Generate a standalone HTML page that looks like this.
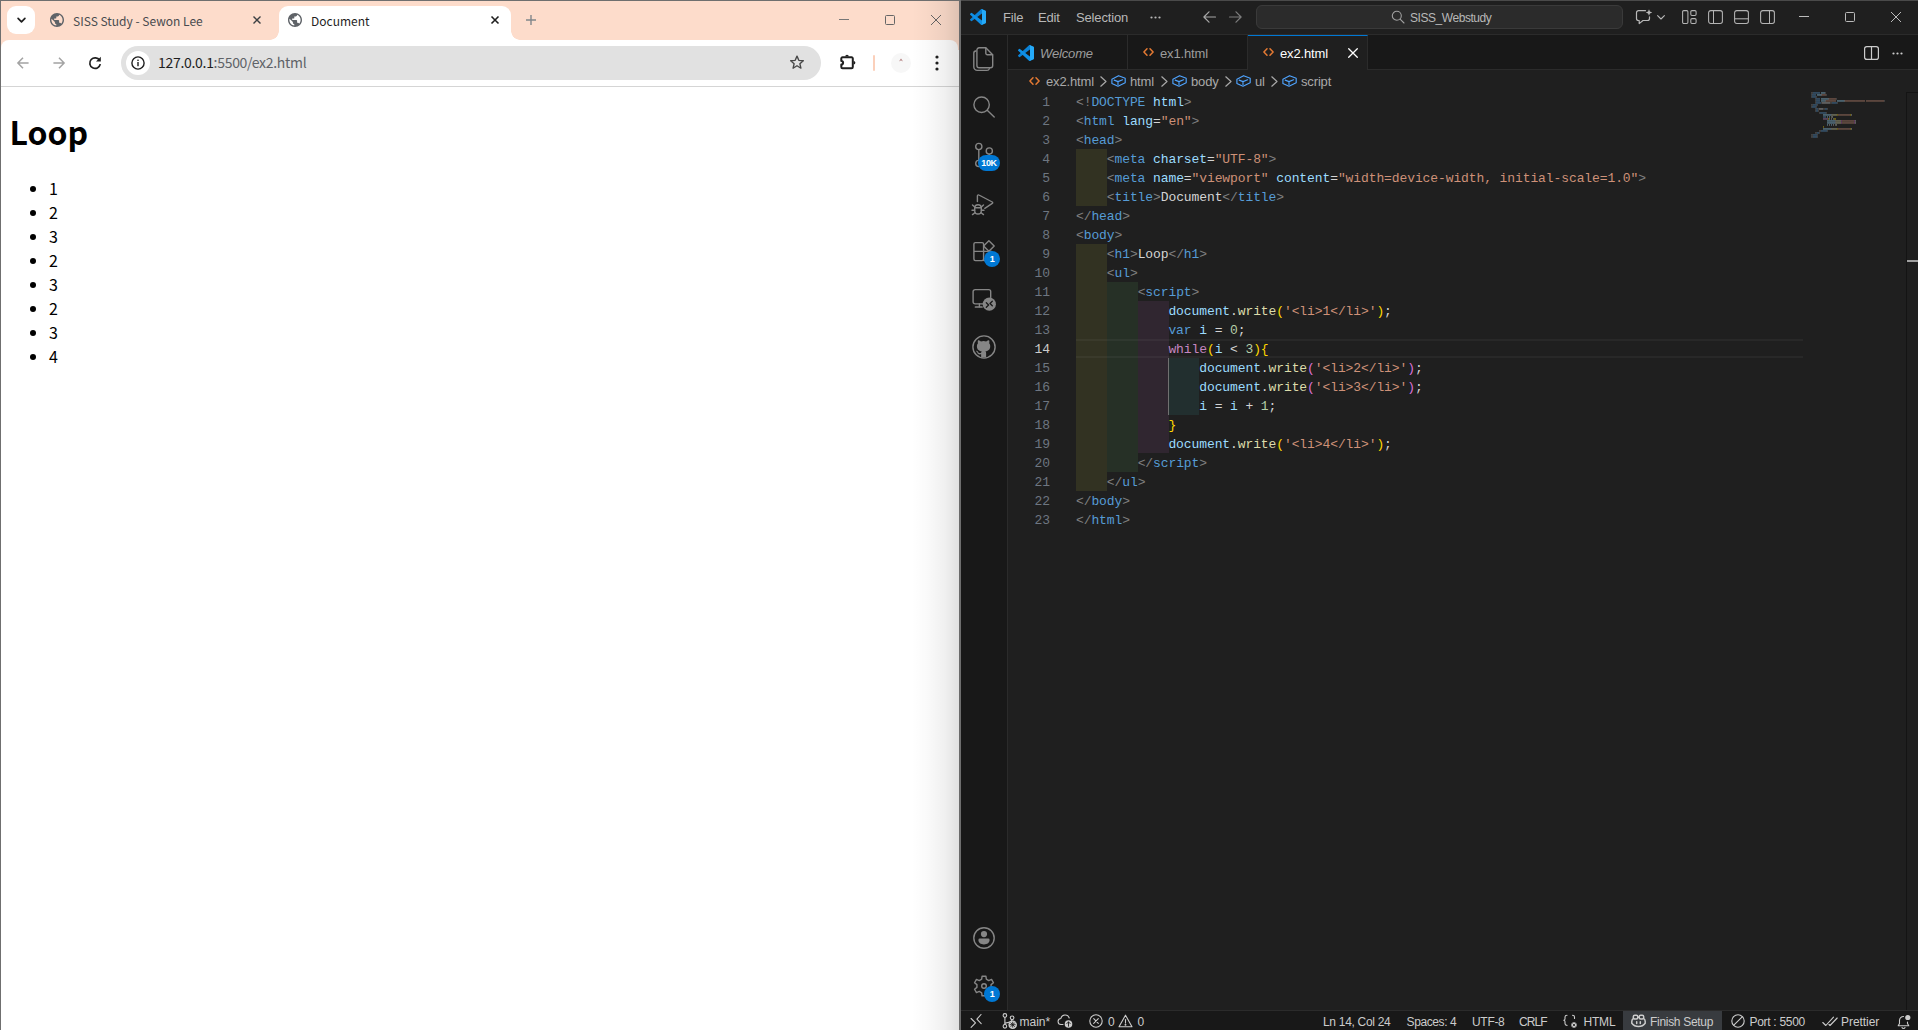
<!DOCTYPE html>
<html lang="en">
<head>
<meta charset="UTF-8">
<title>Document</title>
<style>
*{box-sizing:border-box;margin:0;padding:0}
html,body{width:1918px;height:1030px;overflow:hidden;background:#fff}
body{position:relative;font-family:"Liberation Sans","Noto Sans CJK KR",sans-serif}
.abs{position:absolute}
svg{display:block;overflow:visible}
/* ---------- Chrome ---------- */
#chrome{position:absolute;left:0;top:0;width:961px;height:1030px;background:#fff;overflow:hidden}
#tabstrip{position:absolute;left:0;top:0;width:961px;height:50px;background:#fddccb}
#toolbar{position:absolute;left:1px;top:40px;width:957px;height:46px;background:#fff;border-radius:8px 8px 0 0}
#tbline{position:absolute;left:1px;top:86px;width:959px;height:1px;background:#d5d5d5}
.ctab{position:absolute;top:6px;height:34px;font-family:"Noto Sans CJK KR","Liberation Sans",sans-serif;font-size:12px;color:#484b4f;white-space:nowrap}
.ctab .t{position:absolute;top:0;line-height:30px}
#tabsearch{position:absolute;left:7px;top:6px;width:28px;height:28px;border-radius:9px;background:#fff}
#activetab{position:absolute;left:279px;top:6px;width:232px;height:34px;background:#fff;border-radius:9px 9px 0 0}
#activetab:before,#activetab:after{content:"";position:absolute;bottom:0;width:9px;height:9px;background:radial-gradient(circle at 0 0,rgba(255,255,255,0) 8.5px,#fff 9px)}
#activetab:before{left:-9px}
#activetab:after{right:-9px;background:radial-gradient(circle at 100% 0,rgba(255,255,255,0) 8.5px,#fff 9px)}
#omni{position:absolute;left:121px;top:46px;width:700px;height:34px;border-radius:17px;background:#e1e1e1}
#omni .ic{position:absolute;left:5px;top:5px;width:24px;height:24px;border-radius:12px;background:#fff}
#url{position:absolute;left:158px;top:46px;line-height:33px;font-size:14px;letter-spacing:-0.3px;color:#5f6368;font-family:"Noto Sans CJK KR","Liberation Sans",sans-serif;white-space:nowrap}
#url b{font-weight:normal;color:#1f1f1f}
#cborder-l{position:absolute;left:0;top:0;width:1px;height:1030px;background:#6f6f6f}
#cborder-t{position:absolute;left:0;top:0;width:961px;height:1px;background:#6f6f6f}
/* page */
#page{position:absolute;left:1px;top:87px;width:959px;height:943px;background:#fff;color:#000;font-family:"Noto Sans CJK KR","Liberation Sans",sans-serif}
#page h1{position:absolute;left:8.5px;top:21px;font-size:32px;line-height:46px;font-weight:bold;letter-spacing:0}
#page ul{position:absolute;left:8px;top:89px;list-style:none}
#page li{position:relative;height:24px;line-height:24px;font-size:16px;padding-left:40px}
#page li:before{content:"";position:absolute;left:21px;top:10px;width:6px;height:6px;border-radius:3px;background:#000}
/* ---------- VS Code ---------- */
#vsc{position:absolute;left:960px;top:0;width:958px;height:1030px;background:#1f1f1f;color:#ccc;font-size:13px;overflow:hidden}
#vsc{font-family:"Liberation Sans",sans-serif}
#vsc .bl{position:absolute;background:#2b2b2b}
#titlebar{position:absolute;left:1px;top:1px;width:957px;height:33px;background:#1f1f1f}
.menu{position:absolute;top:2px;line-height:32px;font-size:13px;letter-spacing:-0.15px;color:#ccc;white-space:nowrap}
#cmd{position:absolute;left:296px;top:5px;width:367px;height:24px;border-radius:6px;background:#2b2b2b;border:1px solid #3a3a3a}
#actbar{position:absolute;left:1px;top:35px;width:46px;height:975px;background:#181818}
#tabs{position:absolute;left:48px;top:35px;width:910px;height:35px;background:#181818}
.vtab{position:absolute;top:0;height:34px;width:120px;border-right:1px solid #2b2b2b;font-size:13px;color:#9d9d9d;white-space:nowrap}
.vtab .t{position:absolute;top:0;line-height:35px}
.vtab.act{background:#1f1f1f;height:35px;color:#fff;border-top:1px solid #0078d4}
.vtab.act .t{line-height:34px;top:0}
#crumbs{position:absolute;left:48px;top:70px;width:896px;height:22px;font-size:13px;color:#a9a9a9;white-space:nowrap}
#crumbs span{position:absolute;top:0;line-height:22px}
#editor{position:absolute;left:48px;top:92px;width:910px;height:917px}
.ln{position:absolute;left:0;width:42px;padding-top:1px;text-align:right;font-family:"Liberation Mono",monospace;font-size:13px;letter-spacing:-0.1px;line-height:19px;color:#6e7681;height:19px}
.ln.cur{color:#ccc}
.cl{position:absolute;left:68px;height:19px;padding-top:1px;line-height:19px;font-family:"Liberation Mono",monospace;font-size:13px;letter-spacing:-0.1px;white-space:pre;color:#d4d4d4}
.g{color:#808080}.tg{color:#569cd6}.at{color:#9cdcfe}.st{color:#ce9178}.kw{color:#569cd6}.ct{color:#c586c0}.nu{color:#b5cea8}.fn{color:#dcdcaa}.b1{color:#ffd700}.b2{color:#da70d6}.tx{color:#d4d4d4}
.ig{position:absolute;width:30.8px}
#status{position:absolute;left:1px;top:1010px;width:957px;height:20px;background:#181818;border-top:1px solid #2b2b2b;font-size:12px;color:#ccc;white-space:nowrap}
#status span{position:absolute;top:0;line-height:23px}
.badge{position:absolute;background:#0078d4;color:#fff;font-weight:bold;font-size:9px;letter-spacing:-0.3px;text-align:center;border-radius:8px;height:16px;line-height:16px}
</style>
</head>
<body>
<div id="chrome">
  <div id="tabstrip"></div>
  <div id="tabsearch">
    <svg class="abs" style="left:9.500px;top:10.500px" width="9" height="7.200" viewBox="0 0 10 8"><path d="M1.2 1.6 L5 5.4 L8.8 1.6" fill="none" stroke="#1f1f1f" stroke-width="1.9" stroke-linecap="round" stroke-linejoin="round"/></svg>
  </div>
  <div class="ctab" style="left:40px;width:235px">
    <svg class="abs" style="left:10px;top:7px" width="14" height="14" viewBox="0 0 24 24"><path fill="#5f6368" d="M12 0C5.4 0 0 5.4 0 12s5.4 12 12 12 12-5.400 12-12S18.600 0 12 0zm-1.200 21.500c-4.700-.6-8.400-4.600-8.400-9.500 0-.700.100-1.400.200-2.100L8.400 15.600v1.200c0 1.300 1.100 2.400 2.400 2.400v2.300zm8.300-3c-.3-1-1.200-1.700-2.300-1.700h-1.200v-3.600c0-.700-.5-1.200-1.200-1.200H7.200V9.600h2.400c.7 0 1.200-.5 1.200-1.200V6h2.400c1.300 0 2.400-1.100 2.400-2.400v-.5c3.500 1.400 6 4.900 6 8.900 0 2.500-1 4.800-2.500 6.500z"/></svg>
    <span class="t" style="left:33px">SISS Study - Sewon Lee</span>
    <svg class="abs" style="left:213px;top:10px" width="8" height="8" viewBox="0 0 8 8"><path d="M0.500.5 L7.500 7.500 M7.500.5 L0.500 7.500" stroke="#3c4043" stroke-width="1.400" fill="none"/></svg>
  </div>
  <div id="activetab"></div>
  <div class="ctab" style="left:279px;width:233px;color:#1f1f1f">
    <svg class="abs" style="left:9px;top:7px" width="14" height="14" viewBox="0 0 24 24"><path fill="#5f6368" d="M12 0C5.4 0 0 5.4 0 12s5.4 12 12 12 12-5.400 12-12S18.600 0 12 0zm-1.200 21.500c-4.700-.6-8.400-4.600-8.400-9.500 0-.700.100-1.400.200-2.100L8.400 15.600v1.200c0 1.300 1.100 2.400 2.400 2.400v2.300zm8.300-3c-.3-1-1.200-1.700-2.300-1.700h-1.200v-3.600c0-.700-.5-1.200-1.200-1.200H7.200V9.600h2.400c.7 0 1.200-.5 1.200-1.200V6h2.400c1.300 0 2.400-1.100 2.400-2.400v-.5c3.500 1.400 6 4.900 6 8.900 0 2.500-1 4.800-2.500 6.500z"/></svg>
    <span class="t" style="left:32px">Document</span>
    <svg class="abs" style="left:212px;top:10px" width="8" height="8" viewBox="0 0 8 8"><path d="M0.500.5 L7.500 7.500 M7.500.5 L0.500 7.500" stroke="#1f1f1f" stroke-width="1.600" fill="none"/></svg>
  </div>
  <!-- new tab plus -->
  <svg class="abs" style="left:526px;top:15px" width="10" height="10" viewBox="0 0 10 10"><path d="M5 0V10M0 5H10" stroke="#80868b" stroke-width="1.400" fill="none"/></svg>
  <!-- window controls -->
  <svg class="abs" style="left:839px;top:19px" width="10" height="1" viewBox="0 0 10 1"><rect width="10" height="1" fill="#777"/></svg>
  <svg class="abs" style="left:885px;top:15px" width="10" height="10" viewBox="0 0 10 10"><rect x=".5" y=".5" width="9" height="9" rx="1" fill="none" stroke="#666" stroke-width="1"/></svg>
  <svg class="abs" style="left:931px;top:15px" width="10" height="10" viewBox="0 0 10 10"><path d="M0 0L10 10M10 0L0 10" stroke="#666" stroke-width="1" fill="none"/></svg>

  <div id="toolbar"></div>
  <div id="tbline"></div>
  <!-- nav -->
  <svg class="abs" style="left:17px;top:57px" width="12" height="12" viewBox="0 0 12 12"><path d="M6 .7 L.9 6 L6 11.300 M1 6 H11.600" stroke="#a3a3a3" stroke-width="1.500" fill="none"/></svg>
  <svg class="abs" style="left:53px;top:57px" width="12" height="12" viewBox="0 0 12 12"><path d="M6 .7 L11.100 6 L6 11.300 M11 6 H.4" stroke="#a3a3a3" stroke-width="1.500" fill="none"/></svg>
  <svg class="abs" style="left:88px;top:56px" width="14" height="14" viewBox="0 0 14 14"><path d="M11.600 4.300 A5.300 5.300 0 1 0 12.300 8.200" stroke="#1f1f1f" stroke-width="1.700" fill="none"/><path d="M12.800.8 V5.600 H8 Z" fill="#1f1f1f"/></svg>
  <div id="omni"><div class="ic"></div>
    <svg class="abs" style="left:10px;top:10px" width="14" height="14" viewBox="0 0 14 14"><circle cx="7" cy="7" r="6.100" fill="none" stroke="#1f1f1f" stroke-width="1.400"/><rect x="6.300" y="6" width="1.400" height="4.200" fill="#1f1f1f"/><rect x="6.300" y="3.600" width="1.400" height="1.400" fill="#1f1f1f"/></svg>
  </div>
  <div id="url"><b>127.0.0.1</b>:5500/ex2.html</div>
  <!-- star -->
  <svg class="abs" style="left:789px;top:54px" width="16" height="16" viewBox="0 0 24 24"><path d="M12 3.200l2.700 6.300 6.800.6-5.200 4.500 1.600 6.700L12 17.700l-5.900 3.600 1.600-6.700-5.200-4.500 6.800-.6z" fill="none" stroke="#474747" stroke-width="2" stroke-linejoin="round"/></svg>
  <!-- extension puzzle -->
  <svg class="abs" style="left:838px;top:53px" width="18" height="18" viewBox="0 0 18 18"><path d="M3.300 5.500a1.200 1.200 0 0 1 1.200-1.200H13.600a1.200 1.200 0 0 1 1.200 1.200V14.100a1.200 1.200 0 0 1-1.200 1.200H4.500a1.200 1.200 0 0 1-1.200-1.200V11.600a1.800 1.800 0 0 0 0-3.600Z" fill="none" stroke="#1f1f1f" stroke-width="2" stroke-linejoin="round"/><path d="M7.200 3.500a1.800 1.800 0 0 1 3.600 0zM15.600 8a1.800 1.800 0 0 1 0 3.600z" fill="#1f1f1f"/></svg>
  <div class="abs" style="left:873px;top:55px;width:2px;height:16px;background:#fbd0bb;border-radius:1px"></div>
  <div class="abs" style="left:891px;top:53px;width:20px;height:20px;border-radius:10px;background:#f7f7f7"></div>
  <svg class="abs" style="left:898px;top:58px" width="6" height="5" viewBox="0 0 6 5"><path d="M3 .5 L5 3.500 L3 2.300 L1 3.500Z" fill="#8b3a3a" opacity=".7"/></svg>
  <svg class="abs" style="left:935px;top:55px" width="4" height="16" viewBox="0 0 4 16"><circle cx="2" cy="2" r="1.600" fill="#1f1f1f"/><circle cx="2" cy="8" r="1.600" fill="#1f1f1f"/><circle cx="2" cy="14" r="1.600" fill="#1f1f1f"/></svg>

  <div id="page">
    <h1>Loop</h1>
    <ul><li>1</li><li>2</li><li>3</li><li>2</li><li>3</li><li>2</li><li>3</li><li>4</li></ul>
  </div>
  <div class="abs" style="left:912px;top:0;width:47px;height:1030px;background:linear-gradient(to right,rgba(0,0,0,0),rgba(0,0,0,0.02) 30%,rgba(0,0,0,0.06) 70%,rgba(0,0,0,0.12))"></div><div class="abs" style="left:959px;top:0;width:2px;height:1030px;background:#6a6a6a"></div><div id="cborder-l"></div><div id="cborder-t"></div>
</div>
<div id="vsc">
<div class="abs" style="left:0;top:0;width:958px;height:1px;background:#4a4a4a"></div>
<div class="abs" style="left:0;top:0;width:1px;height:1030px;background:#6e6e6e"></div>
<div id="titlebar"></div>
<div class="bl" style="left:1px;top:34px;width:957px;height:1px"></div>
<!-- logo -->
<svg class="abs" style="left:10px;top:9px" width="16" height="16" viewBox="0 0 100 100"><path d="M96.500 10.800 75.900.9a6.200 6.200 0 0 0-7.100 1.200L1.300 63.600a4.200 4.200 0 0 0 0 6.200l5.500 5a4.200 4.200 0 0 0 5.300.2L93.400 13.400c2.700-2.100 6.600-.1 6.600 3.300v-.2a6.300 6.300 0 0 0-3.500-5.700Z" fill="#0b82d6"/><path d="m96.500 89.200-20.600 9.900a6.200 6.200 0 0 1-7.100-1.200L1.300 36.400a4.200 4.200 0 0 1 0-6.200l5.500-5a4.200 4.200 0 0 1 5.300-.2l81.300 61.600c2.700 2.100 6.600.1 6.600-3.300v.2a6.300 6.300 0 0 1-3.500 5.700Z" fill="#0e8fe6"/><path d="M75.900 99.100a6.200 6.200 0 0 1-7.100-1.200c2.300 2.300 6.200.7 6.200-2.600V4.700c0-3.300-3.900-4.900-6.200-2.600A6.200 6.200 0 0 1 75.900.9l20.600 9.900a6.300 6.300 0 0 1 3.500 5.600v67.200a6.300 6.300 0 0 1-3.500 5.600Z" fill="#25aaf8"/></svg>
<span class="menu" style="left:43px;color:#b8b8b8">File</span>
<span class="menu" style="left:78px;color:#b8b8b8">Edit</span>
<span class="menu" style="left:116px;color:#b8b8b8">Selection</span>
<svg class="abs" style="left:190px;top:16px" width="11" height="3" viewBox="0 0 11 3"><circle cx="1.500" cy="1.500" r="1.100" fill="#b8b8b8"/><circle cx="5.500" cy="1.500" r="1.100" fill="#b8b8b8"/><circle cx="9.500" cy="1.500" r="1.100" fill="#b8b8b8"/></svg>
<!-- nav arrows -->
<svg class="abs" style="left:243px;top:11px" width="13" height="12" viewBox="0 0 13 12"><path d="M6 .8 L.9 6 L6 11.200 M1 6 H12.500" stroke="#a8a8a8" stroke-width="1.200" fill="none" stroke-linecap="round" stroke-linejoin="round"/></svg>
<svg class="abs" style="left:269px;top:11px" width="13" height="12" viewBox="0 0 13 12"><path d="M7 .8 L12.100 6 L7 11.200 M12 6 H.5" stroke="#7c7c7c" stroke-width="1.200" fill="none" stroke-linecap="round" stroke-linejoin="round"/></svg>
<div id="cmd"></div>
<svg class="abs" style="left:431px;top:10px" width="14" height="14" viewBox="0 0 14 14"><circle cx="5.800" cy="5.800" r="4.500" fill="none" stroke="#a0a0a0" stroke-width="1.100"/><path d="M9.100 9.100 L13 13" stroke="#a0a0a0" stroke-width="1.100" stroke-linecap="round"/></svg>
<span class="menu" style="left:450px;font-size:12px;top:2px;line-height:33px;letter-spacing:-0.45px;color:#b8b8b8">SISS_Webstudy</span>
<!-- copilot chat -->
<svg class="abs" style="left:675px;top:9px" width="18" height="16" viewBox="0 0 18 16"><path d="M10.500 1.700 H3.500 a2 2 0 0 0 -2 2 V9.500 a2 2 0 0 0 2 2 H4.200 V14.600 L8 11.500 H12.500 a2 2 0 0 0 2 -2 V7.800" fill="none" stroke="#b8b8b8" stroke-width="1.200" stroke-linejoin="round" stroke-linecap="round"/><path d="M14 .3 l.9 2.300 2.300.9 -2.300.9 -.9 2.300 -.9-2.300 -2.300-.9 2.300-.9z" fill="#b8b8b8"/></svg>
<svg class="abs" style="left:697px;top:15px" width="8" height="5" viewBox="0 0 8 5"><path d="M.6.6 L4 4 L7.400.6" fill="none" stroke="#b8b8b8" stroke-width="1.100" stroke-linecap="round" stroke-linejoin="round"/></svg>
<!-- layout icons -->
<svg class="abs" style="left:722px;top:10px" width="15" height="14" viewBox="0 0 15 14"><rect x=".6" y=".6" width="5.300" height="12.800" rx="1.200" fill="none" stroke="#b4b4b4" stroke-width="1.050"/><rect x="8.800" y=".6" width="5.300" height="4.800" rx="1.200" fill="none" stroke="#b4b4b4" stroke-width="1.050"/><rect x="8.800" y="8.600" width="5.300" height="4.800" rx="1.200" fill="none" stroke="#b4b4b4" stroke-width="1.050"/></svg>
<svg class="abs" style="left:748px;top:10px" width="15" height="14" viewBox="0 0 15 14"><rect x=".6" y=".6" width="13.800" height="12.800" rx="2.200" fill="none" stroke="#b4b4b4" stroke-width="1.050"/><path d="M5.500.6V13.400" stroke="#b4b4b4" stroke-width="1.050"/></svg>
<svg class="abs" style="left:774px;top:10px" width="15" height="14" viewBox="0 0 15 14"><rect x=".6" y=".6" width="13.800" height="12.800" rx="2.200" fill="none" stroke="#b4b4b4" stroke-width="1.050"/><path d="M.6 8.800H14.400" stroke="#b4b4b4" stroke-width="1.050"/></svg>
<svg class="abs" style="left:800px;top:10px" width="15" height="14" viewBox="0 0 15 14"><rect x=".6" y=".6" width="13.800" height="12.800" rx="2.200" fill="none" stroke="#b4b4b4" stroke-width="1.050"/><path d="M9.500.6V13.400" stroke="#b4b4b4" stroke-width="1.050"/></svg>
<!-- window controls -->
<svg class="abs" style="left:839px;top:16px" width="10" height="1" viewBox="0 0 10 1"><rect width="10" height="1" fill="#bbb"/></svg>
<svg class="abs" style="left:885px;top:12px" width="10" height="10" viewBox="0 0 10 10"><rect x=".5" y=".5" width="9" height="9" rx="1" fill="none" stroke="#bbb" stroke-width="1"/></svg>
<svg class="abs" style="left:931px;top:12px" width="10" height="10" viewBox="0 0 10 10"><path d="M0 0L10 10M10 0L0 10" stroke="#bbb" stroke-width="1" fill="none"/></svg>
<div id="actbar"></div>
<div class="bl" style="left:47px;top:35px;width:1px;height:975px"></div>
<!-- explorer -->
<svg class="abs" style="left:11px;top:46px" width="24" height="26" viewBox="0 0 24 26" fill="none" stroke="#868686" stroke-width="1.400" stroke-linejoin="round" stroke-linecap="round"><path d="M8.100 1.800H14.800L21.700 8.700V19.500a2.200 2.200 0 0 1-2.200 2.200H8.100a2.200 2.200 0 0 1-2.200-2.200V4a2.200 2.200 0 0 1 2.200-2.200z"/><path d="M14.800 2V7.200a1.500 1.500 0 0 0 1.500 1.500H21.500"/><path d="M4.800 5a2.200 2.200 0 0 0-2 2.200V20.900a3.500 3.500 0 0 0 3.500 3.500H16a2.500 2.500 0 0 0 2.400-1.800"/></svg>
<!-- search -->
<svg class="abs" style="left:11px;top:94px" width="24" height="24" viewBox="0 0 24 24" fill="none" stroke="#868686" stroke-width="1.400" stroke-linecap="round"><circle cx="10.600" cy="10.750" r="7.700"/><path d="M16.200 16.350 L23.200 23"/></svg>
<!-- scm -->
<svg class="abs" style="left:12px;top:143px" width="24" height="24" viewBox="0 0 24 24" fill="none" stroke="#868686" stroke-width="1.400" stroke-linecap="round"><circle cx="6.800" cy="3.500" r="3.100"/><circle cx="17.300" cy="8" r="3.100"/><circle cx="6.800" cy="20.500" r="3.100"/><path d="M6.800 6.600V17.400"/><path d="M17.300 11.100c0 4-3.500 5.400-7.500 5.400"/></svg>
<div class="badge" style="left:18px;top:155px;width:22px">10K</div>
<!-- debug -->
<svg class="abs" style="left:10px;top:191.500px" width="24" height="24" viewBox="0 0 24 24" fill="none" stroke="#868686" stroke-width="1.400" stroke-linecap="round" stroke-linejoin="round"><path d="M7.400 9.500V3.900a1 1 0 0 1 1.500-.9L22.300 10a.8.8 0 0 1 0 1.400L14.800 16.300"/><rect x="4.700" y="12.700" width="6.600" height="9.300" rx="3.300"/><path d="M4.700 15.700h6.600M4.700 15l-2.200-2M11.300 15l2.200-2M4.700 18.300H2M11.300 18.300H14M4.900 20.700l-2.400 1.900M11.100 20.700l2.400 1.900"/></svg>
<!-- extensions -->
<svg class="abs" style="left:12px;top:239px" width="24" height="24" viewBox="0 0 24 24" fill="none" stroke="#868686" stroke-width="1.400" stroke-linejoin="round"><path d="M3.400 3.600h6.700a1.500 1.500 0 0 1 1.500 1.500v15a1.500 1.500 0 0 1-1.500 1.500H3.400a1.500 1.500 0 0 1-1.500-1.500V5.100a1.500 1.500 0 0 1 1.500-1.500zM1.900 12.400h18M11.600 21.600h7a1.500 1.500 0 0 0 1.500-1.500v-6.200a1.500 1.500 0 0 0-1.500-1.500"/><path d="M16.900 1.700l5.300 5.300-5.300 5.300-5.300-5.300z"/></svg>
<div class="badge" style="left:24px;top:251px;width:16px">1</div>
<!-- remote -->
<svg class="abs" style="left:12px;top:287px" width="24" height="24" viewBox="0 0 24 24" fill="none" stroke="#868686" stroke-width="1.400" stroke-linecap="round" stroke-linejoin="round"><path d="M11 16.900H3.100a2 2 0 0 1-2-2V4.600a2 2 0 0 1 2-2H16.700a2 2 0 0 1 2 2V10.500"/><path d="M7.400 16.900v2.800"/><path d="M3.500 20h6.500" stroke-width="1.700"/><circle cx="17.300" cy="17.200" r="6.600" fill="#868686" stroke="none"/><path d="M14.300 15.800l2.300 2.200-2.300 2.200M20.300 14.300l-2.300 2.200 2.300 2.200" stroke="#181818" stroke-width="1.300"/></svg>
<!-- github center (984,347) -->
<svg class="abs" style="left:12px;top:335px" width="24" height="24" viewBox="0 0 24 24"><circle cx="12" cy="12" r="11.100" fill="none" stroke="#868686" stroke-width="1.400"/><path fill="#868686" transform="translate(12 12) scale(1.06) translate(-12 -12)" d="M9.300 22v-3.100c-2.800.6-3.400-1.200-3.400-1.200-.5-1.200-1.100-1.500-1.100-1.500-.9-.6.100-.6.100-.6 1 .1 1.500 1 1.500 1 .9 1.500 2.300 1.100 2.900.8.100-.6.300-1.100.6-1.300-2.200-.3-4.600-1.100-4.600-5 0-1.100.4-2 1-2.700-.1-.3-.4-1.300.1-2.700 0 0 .8-.3 2.700 1a9.400 9.400 0 0 1 5 0c1.900-1.300 2.700-1 2.700-1 .5 1.400.2 2.400.1 2.700.6.700 1 1.600 1 2.700 0 3.900-2.400 4.700-4.600 5 .4.300.7.900.7 1.900V22z"/></svg>
<!-- account center (984,938) -->
<svg class="abs" style="left:12px;top:926px" width="24" height="24" viewBox="0 0 24 24"><circle cx="12" cy="12" r="10.200" fill="none" stroke="#868686" stroke-width="1.400"/><circle cx="12" cy="8.100" r="3.100" fill="#868686"/><path d="M6.400 14a1.400 1.400 0 0 1 1.400-1.400h8.400a1.400 1.400 0 0 1 1.400 1.400c0 2.500-2.300 4.400-5.600 4.400s-5.600-1.900-5.600-4.400z" fill="#868686"/></svg>
<!-- settings center (984,986) -->
<svg class="abs" style="left:12px;top:974px" width="24" height="24" viewBox="0 0 24 24" fill="none" stroke="#868686" stroke-width="1.400" stroke-linejoin="round"><circle cx="12" cy="12" r="2.300"/><path d="M14.34 5.19 L13.91 2.18 L10.09 2.18 L9.66 5.19 L7.28 6.57 L4.45 5.44 L2.54 8.74 L4.93 10.63 L4.93 13.37 L2.54 15.26 L4.45 18.56 L7.28 17.43 L9.66 18.81 L10.09 21.82 L13.91 21.82 L14.34 18.81 L16.72 17.43 L19.55 18.56 L21.46 15.26 L19.07 13.37 L19.07 10.63 L21.46 8.74 L19.55 5.44 L16.72 6.57Z"/></svg>
<div class="badge" style="left:24px;top:986px;width:16px">1</div>
<div id="tabs"></div>
<div class="bl" style="left:48px;top:69px;width:910px;height:1px"></div>
<div class="vtab" style="left:48px;top:35px"></div>
<div class="vtab" style="left:168px;top:35px"></div>
<div class="vtab act" style="left:288px;top:35px"></div>
<svg class="abs" style="left:58px;top:45px" width="16" height="16" viewBox="0 0 100 100"><path d="M96.500 10.800 75.900.9a6.200 6.200 0 0 0-7.100 1.200L1.300 63.600a4.200 4.200 0 0 0 0 6.200l5.500 5a4.200 4.200 0 0 0 5.300.2L93.400 13.400c2.700-2.100 6.600-.1 6.600 3.300v-.2a6.300 6.300 0 0 0-3.500-5.700Z" fill="#0b82d6"/><path d="m96.500 89.200-20.600 9.900a6.200 6.200 0 0 1-7.100-1.200L1.300 36.400a4.200 4.200 0 0 1 0-6.200l5.500-5a4.200 4.200 0 0 1 5.300-.2l81.300 61.600c2.700 2.100 6.600.1 6.600-3.300v.2a6.300 6.300 0 0 1-3.500 5.700Z" fill="#0e8fe6"/><path d="M75.900 99.100a6.200 6.200 0 0 1-7.100-1.200c2.300 2.300 6.200.7 6.200-2.600V4.700c0-3.300-3.900-4.900-6.200-2.600A6.200 6.200 0 0 1 75.900.9l20.600 9.900a6.300 6.300 0 0 1 3.500 5.600v67.200a6.300 6.300 0 0 1-3.500 5.600Z" fill="#25aaf8"/></svg>
<span class="menu" style="left:80px;top:37px;line-height:34px;color:#9d9d9d;font-style:italic">Welcome</span>
<svg class="abs" style="left:182.5px;top:48px" width="11" height="8" viewBox="0 0 11 8"><path d="M4 .7 L.9 4 L4 7.300 M7 .7 L10.100 4 L7 7.300" fill="none" stroke="#e37933" stroke-width="1.500" stroke-linecap="round" stroke-linejoin="round"/></svg>
<span class="menu" style="left:200px;top:37px;line-height:34px;color:#9d9d9d">ex1.html</span>
<svg class="abs" style="left:302.79999999999995px;top:48px" width="11" height="8" viewBox="0 0 11 8"><path d="M4 .7 L.9 4 L4 7.300 M7 .7 L10.100 4 L7 7.300" fill="none" stroke="#e37933" stroke-width="1.500" stroke-linecap="round" stroke-linejoin="round"/></svg>
<span class="menu" style="left:320px;top:37px;line-height:34px;color:#fff">ex2.html</span>
<svg class="abs" style="left:387.500px;top:48px" width="10" height="10" viewBox="0 0 10 10"><path d="M.7.7L9.300 9.300M9.300.7L.7 9.300" stroke="#fff" stroke-width="1.300" fill="none" stroke-linecap="round"/></svg>
<svg class="abs" style="left:904px;top:46px" width="15" height="14" viewBox="0 0 15 14"><rect x=".6" y=".6" width="13.800" height="12.800" rx="2.200" fill="none" stroke="#ccc" stroke-width="1.200"/><path d="M7.500.6V13.400" stroke="#ccc" stroke-width="1.200"/></svg>
<svg class="abs" style="left:932px;top:51.500px" width="11" height="3" viewBox="0 0 11 3"><circle cx="1.500" cy="1.500" r="1.100" fill="#ccc"/><circle cx="5.500" cy="1.500" r="1.100" fill="#ccc"/><circle cx="9.500" cy="1.500" r="1.100" fill="#ccc"/></svg>
<svg class="abs" style="left:68.79999999999995px;top:77px" width="11" height="8" viewBox="0 0 11 8"><path d="M4 .7 L.9 4 L4 7.300 M7 .7 L10.100 4 L7 7.300" fill="none" stroke="#e37933" stroke-width="1.500" stroke-linecap="round" stroke-linejoin="round"/></svg>
<span class="menu" style="left:86px;top:71px;line-height:22px;color:#a9a9a9">ex2.html</span>
<svg class="abs" style="left:139.5px;top:75.5px" width="7" height="11" viewBox="0 0 7 11"><path d="M.8.8 L6 5.500 L.8 10.200" fill="none" stroke="#a9a9a9" stroke-width="1.200" stroke-linecap="round" stroke-linejoin="round"/></svg>
<svg class="abs" style="left:151.0px;top:75px" width="15" height="12" viewBox="0 0 15 12"><path d="M7.600 .7 L14.200 3.300 V7.700 L7 11.200 L.9 8.500 V4.200 Z M3.200 5.100 L7 6.600 L11.600 4.800 M7 6.600 V9.400" fill="none" stroke="#4fa4ff" stroke-width="1.150" stroke-linejoin="round" stroke-linecap="round"/></svg>
<span class="menu" style="left:170px;top:71px;line-height:22px;color:#a9a9a9">html</span>
<svg class="abs" style="left:200.5px;top:75.5px" width="7" height="11" viewBox="0 0 7 11"><path d="M.8.8 L6 5.500 L.8 10.200" fill="none" stroke="#a9a9a9" stroke-width="1.200" stroke-linecap="round" stroke-linejoin="round"/></svg>
<svg class="abs" style="left:211.5px;top:75px" width="15" height="12" viewBox="0 0 15 12"><path d="M7.600 .7 L14.200 3.300 V7.700 L7 11.200 L.9 8.500 V4.200 Z M3.200 5.100 L7 6.600 L11.600 4.800 M7 6.600 V9.400" fill="none" stroke="#4fa4ff" stroke-width="1.150" stroke-linejoin="round" stroke-linecap="round"/></svg>
<span class="menu" style="left:231px;top:71px;line-height:22px;color:#a9a9a9">body</span>
<svg class="abs" style="left:264.5px;top:75.5px" width="7" height="11" viewBox="0 0 7 11"><path d="M.8.8 L6 5.500 L.8 10.200" fill="none" stroke="#a9a9a9" stroke-width="1.200" stroke-linecap="round" stroke-linejoin="round"/></svg>
<svg class="abs" style="left:275.5px;top:75px" width="15" height="12" viewBox="0 0 15 12"><path d="M7.600 .7 L14.200 3.300 V7.700 L7 11.200 L.9 8.500 V4.200 Z M3.200 5.100 L7 6.600 L11.600 4.800 M7 6.600 V9.400" fill="none" stroke="#4fa4ff" stroke-width="1.150" stroke-linejoin="round" stroke-linecap="round"/></svg>
<span class="menu" style="left:295px;top:71px;line-height:22px;color:#a9a9a9">ul</span>
<svg class="abs" style="left:310.5px;top:75.5px" width="7" height="11" viewBox="0 0 7 11"><path d="M.8.8 L6 5.500 L.8 10.200" fill="none" stroke="#a9a9a9" stroke-width="1.200" stroke-linecap="round" stroke-linejoin="round"/></svg>
<svg class="abs" style="left:321.70000000000005px;top:75px" width="15" height="12" viewBox="0 0 15 12"><path d="M7.600 .7 L14.200 3.300 V7.700 L7 11.200 L.9 8.500 V4.200 Z M3.200 5.100 L7 6.600 L11.600 4.800 M7 6.600 V9.400" fill="none" stroke="#4fa4ff" stroke-width="1.150" stroke-linejoin="round" stroke-linecap="round"/></svg>
<span class="menu" style="left:341px;top:71px;line-height:22px;color:#a9a9a9">script</span>
<div id="editor">
<div class="ig" style="left:68px;width:31px;top:57px;height:57px;background:rgba(255,255,64,0.085)"></div>
<div class="ig" style="left:68px;width:31px;top:152px;height:247px;background:rgba(255,255,64,0.085)"></div>
<div class="ig" style="left:99px;width:31px;top:190px;height:190px;background:rgba(127,255,127,0.08)"></div>
<div class="ig" style="left:130px;width:31px;top:209px;height:152px;background:rgba(255,127,255,0.08)"></div>
<div class="ig" style="left:161px;width:30px;top:266px;height:57px;background:rgba(79,236,236,0.08)"></div>
<div class="abs" style="left:68px;top:247px;width:727px;height:19px;border-top:2px solid rgba(255,255,255,0.045);border-bottom:2px solid rgba(255,255,255,0.045)"></div>
<div class="abs" style="left:160.4px;top:266px;width:1px;height:57px;background:#707070"></div>
<div class="ln" style="top:0px">1</div>
<div class="cl" style="top:0px"><span class="g">&lt;!</span><span class="tg">DOCTYPE</span> <span class="at">html</span><span class="g">&gt;</span></div>
<div class="ln" style="top:19px">2</div>
<div class="cl" style="top:19px"><span class="g">&lt;</span><span class="tg">html</span> <span class="at">lang</span><span class="tx">=</span><span class="st">"en"</span><span class="g">&gt;</span></div>
<div class="ln" style="top:38px">3</div>
<div class="cl" style="top:38px"><span class="g">&lt;</span><span class="tg">head</span><span class="g">&gt;</span></div>
<div class="ln" style="top:57px">4</div>
<div class="cl" style="top:57px">    <span class="g">&lt;</span><span class="tg">meta</span> <span class="at">charset</span><span class="tx">=</span><span class="st">"UTF-8"</span><span class="g">&gt;</span></div>
<div class="ln" style="top:76px">5</div>
<div class="cl" style="top:76px">    <span class="g">&lt;</span><span class="tg">meta</span> <span class="at">name</span><span class="tx">=</span><span class="st">"viewport"</span> <span class="at">content</span><span class="tx">=</span><span class="st">"width=device-width, initial-scale=1.0"</span><span class="g">&gt;</span></div>
<div class="ln" style="top:95px">6</div>
<div class="cl" style="top:95px">    <span class="g">&lt;</span><span class="tg">title</span><span class="g">&gt;</span><span class="tx">Document</span><span class="g">&lt;/</span><span class="tg">title</span><span class="g">&gt;</span></div>
<div class="ln" style="top:114px">7</div>
<div class="cl" style="top:114px"><span class="g">&lt;/</span><span class="tg">head</span><span class="g">&gt;</span></div>
<div class="ln" style="top:133px">8</div>
<div class="cl" style="top:133px"><span class="g">&lt;</span><span class="tg">body</span><span class="g">&gt;</span></div>
<div class="ln" style="top:152px">9</div>
<div class="cl" style="top:152px">    <span class="g">&lt;</span><span class="tg">h1</span><span class="g">&gt;</span><span class="tx">Loop</span><span class="g">&lt;/</span><span class="tg">h1</span><span class="g">&gt;</span></div>
<div class="ln" style="top:171px">10</div>
<div class="cl" style="top:171px">    <span class="g">&lt;</span><span class="tg">ul</span><span class="g">&gt;</span></div>
<div class="ln" style="top:190px">11</div>
<div class="cl" style="top:190px">        <span class="g">&lt;</span><span class="tg">script</span><span class="g">&gt;</span></div>
<div class="ln" style="top:209px">12</div>
<div class="cl" style="top:209px">            <span class="at">document</span><span class="tx">.</span><span class="fn">write</span><span class="b1">(</span><span class="st">'&lt;li&gt;1&lt;/li&gt;'</span><span class="b1">)</span><span class="tx">;</span></div>
<div class="ln" style="top:228px">13</div>
<div class="cl" style="top:228px">            <span class="kw">var</span> <span class="at">i</span> <span class="tx">=</span> <span class="nu">0</span><span class="tx">;</span></div>
<div class="ln cur" style="top:247px">14</div>
<div class="cl" style="top:247px">            <span class="ct">while</span><span class="b1">(</span><span class="at">i</span> <span class="tx">&lt;</span> <span class="nu">3</span><span class="b1">)</span><span class="b1">{</span></div>
<div class="ln" style="top:266px">15</div>
<div class="cl" style="top:266px">                <span class="at">document</span><span class="tx">.</span><span class="fn">write</span><span class="b2">(</span><span class="st">'&lt;li&gt;2&lt;/li&gt;'</span><span class="b2">)</span><span class="tx">;</span></div>
<div class="ln" style="top:285px">16</div>
<div class="cl" style="top:285px">                <span class="at">document</span><span class="tx">.</span><span class="fn">write</span><span class="b2">(</span><span class="st">'&lt;li&gt;3&lt;/li&gt;'</span><span class="b2">)</span><span class="tx">;</span></div>
<div class="ln" style="top:304px">17</div>
<div class="cl" style="top:304px">                <span class="at">i</span> <span class="tx">=</span> <span class="at">i</span> <span class="tx">+</span> <span class="nu">1</span><span class="tx">;</span></div>
<div class="ln" style="top:323px">18</div>
<div class="cl" style="top:323px">            <span class="b1">}</span></div>
<div class="ln" style="top:342px">19</div>
<div class="cl" style="top:342px">            <span class="at">document</span><span class="tx">.</span><span class="fn">write</span><span class="b1">(</span><span class="st">'&lt;li&gt;4&lt;/li&gt;'</span><span class="b1">)</span><span class="tx">;</span></div>
<div class="ln" style="top:361px">20</div>
<div class="cl" style="top:361px">        <span class="g">&lt;/</span><span class="tg">script</span><span class="g">&gt;</span></div>
<div class="ln" style="top:380px">21</div>
<div class="cl" style="top:380px">    <span class="g">&lt;/</span><span class="tg">ul</span><span class="g">&gt;</span></div>
<div class="ln" style="top:399px">22</div>
<div class="cl" style="top:399px"><span class="g">&lt;/</span><span class="tg">body</span><span class="g">&gt;</span></div>
<div class="ln" style="top:418px">23</div>
<div class="cl" style="top:418px"><span class="g">&lt;/</span><span class="tg">html</span><span class="g">&gt;</span></div>
</div>
<svg class="abs" style="left:851px;top:92px" width="80" height="50" viewBox="0 0 80 50" opacity="0.5">
<rect x="0" y="0.3" width="2" height="1.300" fill="#808080"/>
<rect x="2" y="0.3" width="7" height="1.300" fill="#569cd6"/>
<rect x="10" y="0.3" width="4" height="1.300" fill="#9cdcfe"/>
<rect x="14" y="0.3" width="1" height="1.300" fill="#808080"/>
<rect x="0" y="2.3" width="1" height="1.300" fill="#808080"/>
<rect x="1" y="2.3" width="4" height="1.300" fill="#569cd6"/>
<rect x="6" y="2.3" width="4" height="1.300" fill="#9cdcfe"/>
<rect x="10" y="2.3" width="1" height="1.300" fill="#d4d4d4"/>
<rect x="11" y="2.3" width="4" height="1.300" fill="#ce9178"/>
<rect x="15" y="2.3" width="1" height="1.300" fill="#808080"/>
<rect x="0" y="4.3" width="1" height="1.300" fill="#808080"/>
<rect x="1" y="4.3" width="4" height="1.300" fill="#569cd6"/>
<rect x="5" y="4.3" width="1" height="1.300" fill="#808080"/>
<rect x="4" y="6.3" width="1" height="1.300" fill="#808080"/>
<rect x="5" y="6.3" width="4" height="1.300" fill="#569cd6"/>
<rect x="10" y="6.3" width="7" height="1.300" fill="#9cdcfe"/>
<rect x="17" y="6.3" width="1" height="1.300" fill="#d4d4d4"/>
<rect x="18" y="6.3" width="7" height="1.300" fill="#ce9178"/>
<rect x="25" y="6.3" width="1" height="1.300" fill="#808080"/>
<rect x="4" y="8.3" width="1" height="1.300" fill="#808080"/>
<rect x="5" y="8.3" width="4" height="1.300" fill="#569cd6"/>
<rect x="10" y="8.3" width="4" height="1.300" fill="#9cdcfe"/>
<rect x="14" y="8.3" width="1" height="1.300" fill="#d4d4d4"/>
<rect x="15" y="8.3" width="10" height="1.300" fill="#ce9178"/>
<rect x="26" y="8.3" width="7" height="1.300" fill="#9cdcfe"/>
<rect x="33" y="8.3" width="1" height="1.300" fill="#d4d4d4"/>
<rect x="34" y="8.3" width="20" height="1.300" fill="#ce9178"/>
<rect x="55" y="8.3" width="18" height="1.300" fill="#ce9178"/>
<rect x="73" y="8.3" width="1" height="1.300" fill="#808080"/>
<rect x="4" y="10.3" width="1" height="1.300" fill="#808080"/>
<rect x="5" y="10.3" width="5" height="1.300" fill="#569cd6"/>
<rect x="10" y="10.3" width="1" height="1.300" fill="#808080"/>
<rect x="11" y="10.3" width="8" height="1.300" fill="#d4d4d4"/>
<rect x="19" y="10.3" width="2" height="1.300" fill="#808080"/>
<rect x="21" y="10.3" width="5" height="1.300" fill="#569cd6"/>
<rect x="26" y="10.3" width="1" height="1.300" fill="#808080"/>
<rect x="0" y="12.3" width="2" height="1.300" fill="#808080"/>
<rect x="2" y="12.3" width="4" height="1.300" fill="#569cd6"/>
<rect x="6" y="12.3" width="1" height="1.300" fill="#808080"/>
<rect x="0" y="14.3" width="1" height="1.300" fill="#808080"/>
<rect x="1" y="14.3" width="4" height="1.300" fill="#569cd6"/>
<rect x="5" y="14.3" width="1" height="1.300" fill="#808080"/>
<rect x="4" y="16.3" width="1" height="1.300" fill="#808080"/>
<rect x="5" y="16.3" width="2" height="1.300" fill="#569cd6"/>
<rect x="7" y="16.3" width="1" height="1.300" fill="#808080"/>
<rect x="8" y="16.3" width="4" height="1.300" fill="#d4d4d4"/>
<rect x="12" y="16.3" width="2" height="1.300" fill="#808080"/>
<rect x="14" y="16.3" width="2" height="1.300" fill="#569cd6"/>
<rect x="16" y="16.3" width="1" height="1.300" fill="#808080"/>
<rect x="4" y="18.3" width="1" height="1.300" fill="#808080"/>
<rect x="5" y="18.3" width="2" height="1.300" fill="#569cd6"/>
<rect x="7" y="18.3" width="1" height="1.300" fill="#808080"/>
<rect x="8" y="20.3" width="1" height="1.300" fill="#808080"/>
<rect x="9" y="20.3" width="6" height="1.300" fill="#569cd6"/>
<rect x="15" y="20.3" width="1" height="1.300" fill="#808080"/>
<rect x="12" y="22.3" width="8" height="1.300" fill="#9cdcfe"/>
<rect x="20" y="22.3" width="1" height="1.300" fill="#d4d4d4"/>
<rect x="21" y="22.3" width="5" height="1.300" fill="#dcdcaa"/>
<rect x="26" y="22.3" width="1" height="1.300" fill="#ffd700"/>
<rect x="27" y="22.3" width="12" height="1.300" fill="#ce9178"/>
<rect x="39" y="22.3" width="1" height="1.300" fill="#ffd700"/>
<rect x="40" y="22.3" width="1" height="1.300" fill="#d4d4d4"/>
<rect x="12" y="24.3" width="3" height="1.300" fill="#569cd6"/>
<rect x="16" y="24.3" width="1" height="1.300" fill="#9cdcfe"/>
<rect x="18" y="24.3" width="1" height="1.300" fill="#d4d4d4"/>
<rect x="20" y="24.3" width="1" height="1.300" fill="#b5cea8"/>
<rect x="21" y="24.3" width="1" height="1.300" fill="#d4d4d4"/>
<rect x="12" y="26.3" width="5" height="1.300" fill="#c586c0"/>
<rect x="17" y="26.3" width="1" height="1.300" fill="#ffd700"/>
<rect x="18" y="26.3" width="1" height="1.300" fill="#9cdcfe"/>
<rect x="20" y="26.3" width="1" height="1.300" fill="#d4d4d4"/>
<rect x="22" y="26.3" width="1" height="1.300" fill="#b5cea8"/>
<rect x="23" y="26.3" width="1" height="1.300" fill="#ffd700"/>
<rect x="24" y="26.3" width="1" height="1.300" fill="#ffd700"/>
<rect x="16" y="28.3" width="8" height="1.300" fill="#9cdcfe"/>
<rect x="24" y="28.3" width="1" height="1.300" fill="#d4d4d4"/>
<rect x="25" y="28.3" width="5" height="1.300" fill="#dcdcaa"/>
<rect x="30" y="28.3" width="1" height="1.300" fill="#da70d6"/>
<rect x="31" y="28.3" width="12" height="1.300" fill="#ce9178"/>
<rect x="43" y="28.3" width="1" height="1.300" fill="#da70d6"/>
<rect x="44" y="28.3" width="1" height="1.300" fill="#d4d4d4"/>
<rect x="16" y="30.3" width="8" height="1.300" fill="#9cdcfe"/>
<rect x="24" y="30.3" width="1" height="1.300" fill="#d4d4d4"/>
<rect x="25" y="30.3" width="5" height="1.300" fill="#dcdcaa"/>
<rect x="30" y="30.3" width="1" height="1.300" fill="#da70d6"/>
<rect x="31" y="30.3" width="12" height="1.300" fill="#ce9178"/>
<rect x="43" y="30.3" width="1" height="1.300" fill="#da70d6"/>
<rect x="44" y="30.3" width="1" height="1.300" fill="#d4d4d4"/>
<rect x="16" y="32.3" width="1" height="1.300" fill="#9cdcfe"/>
<rect x="18" y="32.3" width="1" height="1.300" fill="#d4d4d4"/>
<rect x="20" y="32.3" width="1" height="1.300" fill="#9cdcfe"/>
<rect x="22" y="32.3" width="1" height="1.300" fill="#d4d4d4"/>
<rect x="24" y="32.3" width="1" height="1.300" fill="#b5cea8"/>
<rect x="25" y="32.3" width="1" height="1.300" fill="#d4d4d4"/>
<rect x="12" y="34.3" width="1" height="1.300" fill="#ffd700"/>
<rect x="12" y="36.3" width="8" height="1.300" fill="#9cdcfe"/>
<rect x="20" y="36.3" width="1" height="1.300" fill="#d4d4d4"/>
<rect x="21" y="36.3" width="5" height="1.300" fill="#dcdcaa"/>
<rect x="26" y="36.3" width="1" height="1.300" fill="#ffd700"/>
<rect x="27" y="36.3" width="12" height="1.300" fill="#ce9178"/>
<rect x="39" y="36.3" width="1" height="1.300" fill="#ffd700"/>
<rect x="40" y="36.3" width="1" height="1.300" fill="#d4d4d4"/>
<rect x="8" y="38.3" width="2" height="1.300" fill="#808080"/>
<rect x="10" y="38.3" width="6" height="1.300" fill="#569cd6"/>
<rect x="16" y="38.3" width="1" height="1.300" fill="#808080"/>
<rect x="4" y="40.3" width="2" height="1.300" fill="#808080"/>
<rect x="6" y="40.3" width="2" height="1.300" fill="#569cd6"/>
<rect x="8" y="40.3" width="1" height="1.300" fill="#808080"/>
<rect x="0" y="42.3" width="2" height="1.300" fill="#808080"/>
<rect x="2" y="42.3" width="4" height="1.300" fill="#569cd6"/>
<rect x="6" y="42.3" width="1" height="1.300" fill="#808080"/>
<rect x="0" y="44.3" width="2" height="1.300" fill="#808080"/>
<rect x="2" y="44.3" width="4" height="1.300" fill="#569cd6"/>
<rect x="6" y="44.3" width="1" height="1.300" fill="#808080"/>
</svg>
<div class="abs" style="left:946px;top:92px;width:1px;height:918px;background:#141414"></div>
<div class="abs" style="left:946px;top:92px;width:12px;height:1px;background:#141414"></div>
<div class="abs" style="left:947px;top:260px;width:11px;height:2px;background:#a0a0a0"></div>
<div id="status"></div>
<svg class="abs" style="left:10px;top:1014px" width="12" height="14" viewBox="0 0 12 14" fill="none" stroke="#ccc" stroke-width="1.100" stroke-linecap="round" stroke-linejoin="round"><path d="M1.100 4.500 L5.500 8.900 L1.100 13.300 M11 .5 L6.900 5.200 L11.200 9.600"/></svg>
<svg class="abs" style="left:41.5px;top:1013px" width="16" height="17" viewBox="0 0 16 17" fill="none" stroke="#ccc" stroke-width="1.100" stroke-linecap="round" stroke-linejoin="round"><circle cx="2.900" cy="2.400" r="1.800"/><circle cx="2.900" cy="13.300" r="1.800"/><path d="M2.900 4.200V11.500"/><circle cx="10.100" cy="4.800" r="1.800"/><path d="M10.100 6.600c0 2.500-3.500 3-7 3.500"/><circle cx="10.700" cy="11.700" r="4.300" fill="#ccc" stroke="none"/><path d="M10.700 9.200v5M8.200 11.700h5M8.900 9.900l3.600 3.600M12.500 9.900l-3.600 3.600" stroke="#181818" stroke-width=".8"/></svg>
<span class="menu" style="left:59.5px;top:1011px;line-height:23px;font-size:12px;letter-spacing:0px;color:#ccc">main*</span>
<svg class="abs" style="left:97px;top:1014px" width="17" height="15" viewBox="0 0 17 15" fill="none" stroke="#ccc" stroke-width="1.100" stroke-linecap="round" stroke-linejoin="round"><path d="M6 10.500H4.300a3 3 0 0 1-.4-6 4.300 4.300 0 0 1 8.300-.5"/><circle cx="11.500" cy="10" r="3.800" fill="#ccc" stroke="none"/><path d="M11.500 12.200V8M9.800 9.600l1.700-1.700 1.700 1.700" stroke="#181818" stroke-width=".9"/></svg>
<svg class="abs" style="left:129px;top:1014px" width="14" height="14" viewBox="0 0 14 14" fill="none" stroke="#ccc" stroke-width="1.100" stroke-linecap="round" stroke-linejoin="round"><circle cx="7" cy="7" r="6.200"/><path d="M4.700 4.700l4.600 4.600M9.300 4.700l-4.600 4.600"/></svg>
<span class="menu" style="left:148px;top:1011px;line-height:23px;font-size:12px;letter-spacing:-0.3px;color:#ccc">0</span>
<svg class="abs" style="left:157.5px;top:1014px" width="15" height="14" viewBox="0 0 15 14" fill="none" stroke="#ccc" stroke-width="1.100" stroke-linecap="round" stroke-linejoin="round"><path d="M7.500 1.200 L14 12.800 H1 Z"/><path d="M7.500 5.500V9"/><circle cx="7.500" cy="10.800" r=".4"/></svg>
<span class="menu" style="left:177.5px;top:1011px;line-height:23px;font-size:12px;letter-spacing:-0.3px;color:#ccc">0</span>
<span class="menu" style="left:363px;top:1011px;line-height:23px;font-size:12px;letter-spacing:-0.3px;color:#ccc">Ln 14, Col 24</span>
<span class="menu" style="left:446.5999999999999px;top:1011px;line-height:23px;font-size:12px;letter-spacing:-0.4px;color:#ccc">Spaces: 4</span>
<span class="menu" style="left:512px;top:1011px;line-height:23px;font-size:12px;letter-spacing:-0.3px;color:#ccc">UTF-8</span>
<span class="menu" style="left:559px;top:1011px;line-height:23px;font-size:12px;letter-spacing:-0.9px;color:#ccc">CRLF</span>
<svg class="abs" style="left:603px;top:1014px" width="15" height="15" viewBox="0 0 15 15" fill="none" stroke="#ccc" stroke-width="1.100" stroke-linecap="round" stroke-linejoin="round"><path d="M4 1.200c-1.500 0-2 .6-2 1.800v1.800c0 .9-.4 1.400-1.300 1.500.9.100 1.300.6 1.300 1.500v1.800c0 1.200.5 1.800 2 1.800M9.500 1.200c1.500 0 2 .6 2 1.800v1.500"/><circle cx="11" cy="11" r="2.700" fill="#ccc" stroke="none"/><path d="M9.900 9.900l2.200 2.200M12.100 9.900l-2.200 2.200" stroke="#181818" stroke-width=".8"/></svg>
<span class="menu" style="left:623.5px;top:1011px;line-height:23px;font-size:12px;letter-spacing:-0.2px;color:#ccc">HTML</span>
<div class="abs" style="left:663px;top:1011px;width:99px;height:19px;background:#383b3f"></div>
<svg class="abs" style="left:670.5px;top:1014px" width="15" height="14" viewBox="0 0 15 14" fill="none" stroke="#ccc" stroke-width="1.500" stroke-linecap="round" stroke-linejoin="round"><rect x="2.300" y="1.300" width="4.500" height="3.800" rx="1.500"/><rect x="8.200" y="1.300" width="4.500" height="3.800" rx="1.500"/><path d="M6.800 3.200h1.400"/><path d="M2.300 4.500c-1 .8-1.500 1.800-1.500 3v1.800c1.500 2 4 3.200 6.700 3.200s5.200-1.200 6.700-3.200V7.500c0-1.200-.5-2.200-1.500-3"/><path d="M5.700 7.800v1.800M9.300 7.800v1.800"/></svg>
<span class="menu" style="left:690px;top:1011px;line-height:23px;font-size:12px;letter-spacing:-0.3px;color:#ccc">Finish Setup</span>
<svg class="abs" style="left:771px;top:1014px" width="14" height="14" viewBox="0 0 14 14" fill="none" stroke="#ccc" stroke-width="1.100" stroke-linecap="round" stroke-linejoin="round"><circle cx="7" cy="7" r="6.200"/><path d="M2.800 11.200L11.200 2.800"/></svg>
<span class="menu" style="left:789.5px;top:1011px;line-height:23px;font-size:12px;letter-spacing:-0.3px;color:#ccc">Port : 5500</span>
<svg class="abs" style="left:862px;top:1016px" width="16" height="11" viewBox="0 0 16 11" fill="none" stroke="#ccc" stroke-width="1.100" stroke-linecap="round" stroke-linejoin="round"><path d="M.8 6.500L3.800 9.500L11.500 1.200M7 8.500l1 1L15.200 2"/></svg>
<span class="menu" style="left:881px;top:1011px;line-height:23px;font-size:12px;letter-spacing:-0.05px;color:#ccc">Prettier</span>
<svg class="abs" style="left:937px;top:1014px" width="14" height="16" viewBox="0 0 14 16" fill="none" stroke="#ccc" stroke-width="1.100" stroke-linecap="round" stroke-linejoin="round"><path d="M6.500 2.500a4 4 0 0 0-4 4v3l-1.300 2.200h10.600L10.500 9.500V8"/><path d="M5 13.500a1.600 1.600 0 0 0 3 0"/><circle cx="10.800" cy="3.500" r="2.600" fill="#ccc" stroke="none"/></svg>
</div>
</body>
</html>
